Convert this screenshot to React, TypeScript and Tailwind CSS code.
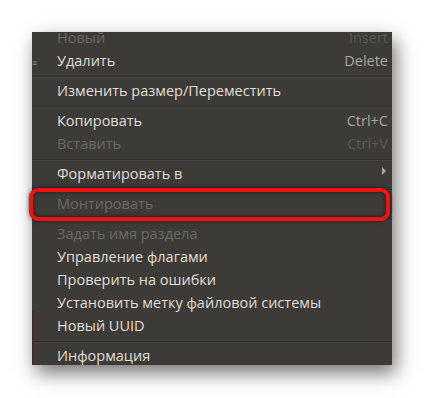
type Row =
  | { kind: 'sep' }
  | { kind: 'item'; label: string; shortcut?: string; disabled?: boolean; submenu?: boolean };

const rows: Row[] = [
  { kind: 'item', label: 'Новый', shortcut: 'Insert', disabled: true },
  { kind: 'item', label: 'Удалить', shortcut: 'Delete' },
  { kind: 'sep' },
  { kind: 'item', label: 'Изменить размер/Переместить' },
  { kind: 'sep' },
  { kind: 'item', label: 'Копировать', shortcut: 'Ctrl+C' },
  { kind: 'item', label: 'Вставить', shortcut: 'Ctrl+V', disabled: true },
  { kind: 'sep' },
  { kind: 'item', label: 'Форматировать в', submenu: true },
  { kind: 'sep' },
  { kind: 'item', label: 'Монтировать', disabled: true },
  { kind: 'sep' },
  { kind: 'item', label: 'Задать имя раздела', disabled: true },
  { kind: 'item', label: 'Управление флагами' },
  { kind: 'item', label: 'Проверить на ошибки' },
  { kind: 'item', label: 'Установить метку файловой системы' },
  { kind: 'item', label: 'Новый UUID' },
  { kind: 'sep' },
  { kind: 'item', label: 'Информация' },
];

function MenuRow({ row }: { row: Row }) {
  if (row.kind === 'sep') {
    return (
      <div className="h-[7px] flex flex-col justify-center">
        <div className="h-px bg-[#2e2d2a]" />
        <div className="h-px bg-[#45443f]" />
      </div>
    );
  }

  return (
    <div className="h-[23px] flex items-center pl-[25px] pr-[4px]">
      <span className={row.disabled ? 'flex-1 text-[#6c6a65]' : 'flex-1 text-[#e2ded6]'}>
        {row.label}
      </span>
      {row.shortcut && (
        <span className={row.disabled ? 'text-[#5a5954]' : 'text-[#aaa79f]'}>{row.shortcut}</span>
      )}
      {row.submenu && (
        <svg width="6" height="8" viewBox="0 0 6 8" className="mr-[1px] -mt-[8px]">
          <path d="M1 0 L5 4 L1 8 Z" fill="#a9a69f" />
        </svg>
      )}
    </div>
  );
}

export default function App() {
  return (
    <div className="relative w-[425px] h-[398px] bg-white pt-[32px] pl-[32px]">
      <div className="relative w-[360px] h-[333px] overflow-hidden bg-[#3c3b37] shadow-[4px_8px_18px_rgba(0,0,0,0.55)] font-['Open_Sans',sans-serif] text-[14.5px] leading-none">
        <div className="-mt-[5px]">
          {rows.map((row, i) => (
            <MenuRow key={i} row={row} />
          ))}
        </div>
        {/* window edge showing through on the left */}
        <div className="absolute left-0 top-[278px] bottom-0 w-[2px] bg-[#4a2631]" />
        <div className="absolute left-0 top-[26px] text-[9px] text-[#8a8780] leading-none">≡</div>
      </div>
      {/* highlight round the Mount item */}
      <div className="absolute left-[29px] top-[188px] w-[361px] h-[33px] rounded-[9px] border-[4px] border-[#f01212] shadow-[0_0_4px_rgba(0,0,0,0.6),inset_0_0_4px_rgba(0,0,0,0.6)]" />
    </div>
  );
}
